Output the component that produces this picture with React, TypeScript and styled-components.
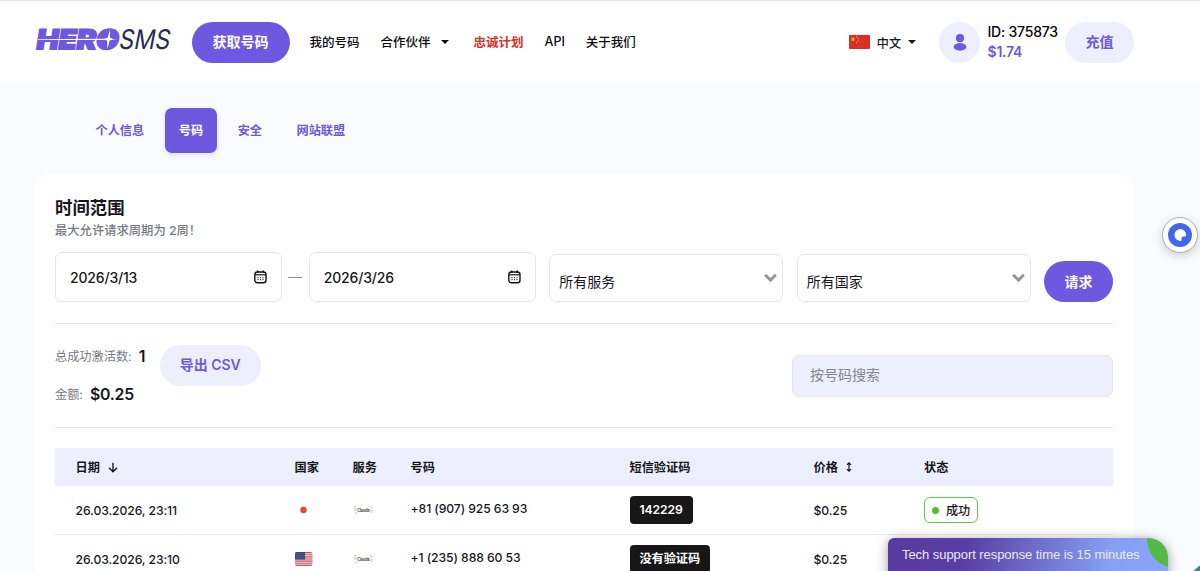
import React from "react";
import styled, { createGlobalStyle, css } from "styled-components";

const purple = "#6f58e0";
const lilac = "#eeeffe";
const ink = "#17171b";

const GlobalStyle = createGlobalStyle`
  * { box-sizing: border-box; }
  html, body { margin: 0; overflow: hidden; }
  body {
    background: #fafbff;
    color: ${ink};
    font-family: Inter, "Noto Sans CJK SC", sans-serif;
    font-size: 12.3px;
  }
  button, input { font-family: inherit; }
`;

const Page = styled.div`
  position: relative;
  height: 571px;
  overflow: hidden;
`;

const Header = styled.header`
  display: flex;
  align-items: center;
  height: 83px;
  padding: 0 66px 0 35px;
  background: #fff;
  border-top: 1px solid #e2e2e4;
`;

const Logo = styled.svg`
  width: 137px;
  height: 30px;
  margin: 0 19.5px 4px 0;
  flex: none;
  overflow: visible;
`;

const Pill = styled.button<{ $w: number; $soft?: boolean }>`
  flex: none;
  width: ${(p) => p.$w}px;
  height: 41px;
  padding: 0 0 2px;
  border: 0;
  border-radius: 21px;
  font-size: 14px;
  font-weight: 600;
  white-space: nowrap;
  color: ${(p) => (p.$soft ? purple : "#fff")};
  background: ${(p) => (p.$soft ? lilac : purple)};
`;

const RequestPill = styled(Pill)`
  margin-left: 13.5px;
`;

const Nav = styled.nav`
  display: flex;
  align-items: center;
  gap: 21px;
  margin-left: 20px;
  padding-bottom: 1px;
  flex: 1;
`;

const NavLink = styled.a<{ $hot?: boolean; $menu?: boolean }>`
  display: flex;
  align-items: center;
  gap: 10px;
  margin-right: ${(p) => (p.$menu ? 4 : 0)}px;
  font-size: 12.5px;
  font-weight: ${(p) => (p.$hot ? 600 : 500)};
  color: ${(p) => (p.$hot ? "#d6302b" : "#0c0c0f")};
  white-space: nowrap;
`;

const Caret = styled.span`
  border: 4px solid transparent;
  border-top-color: currentColor;
  border-bottom: 0;
`;

const Language = styled.div`
  display: flex;
  align-items: center;
  gap: 7px;
  margin-right: 23px;
  font-size: 12.1px;
  font-weight: 500;
`;

const Avatar = styled.div`
  display: grid;
  place-items: center;
  width: 41px;
  height: 41px;
  border-radius: 50%;
  background: ${lilac};
`;

const Account = styled.div`
  width: 78px;
  padding-left: 7.5px;
  margin-right: 7px;
  font-size: 14px;
  letter-spacing: -0.22px;
  line-height: 20.5px;
  font-weight: 500;
  color: #050507;
  white-space: nowrap;
`;

const Balance = styled.div`
  color: ${purple};
  font-weight: 600;
`;

const Tabs = styled.div`
  display: flex;
  gap: 6.5px;
  padding: 25px 0 0 81.5px;
`;

const Tab = styled.a<{ $active?: boolean }>`
  display: flex;
  align-items: center;
  height: 45px;
  padding: 0 14px 1px;
  border-radius: 7px;
  font-size: 12.2px;
  font-weight: 600;
  color: ${purple};
  ${(p) =>
    p.$active &&
    css`
      color: #fff;
      background: ${purple};
      box-shadow: 0 2px 5px rgba(80, 80, 130, 0.16);
    `}
`;

const Card = styled.main`
  width: 1100px;
  height: 420px;
  margin: 21px 0 0 34px;
  padding: 22px 21px 0;
  border-radius: 17px;
  background: #fff;
`;

const Title = styled.h1`
  margin: 0;
  font-size: 17.4px;
  line-height: 24px;
  font-weight: 600;
`;

const Hint = styled.p`
  margin: 0;
  padding-top: 1px;
  font-size: 12.3px;
  line-height: 19px;
  font-weight: 500;
  color: #767a82;
`;

const Filters = styled.div`
  display: flex;
  align-items: flex-end;
  height: 62px;
`;

const DateField = styled.div`
  display: flex;
  align-items: center;
  justify-content: space-between;
  width: 227px;
  height: 50px;
  padding: 0 14px;
  border: 1px solid #e6e6ec;
  border-radius: 7px;
  font-size: 14px;
  letter-spacing: -0.18px;
  font-weight: 500;
`;

const Dash = styled.span`
  width: 14px;
  height: 1px;
  margin: 0 6.5px 24px;
  background: #8f8f94;
`;

const Select = styled.div`
  display: flex;
  justify-content: space-between;
  width: 234px;
  height: 48px;
  margin-left: 13.7px;
  padding: 15px 5px 0 9px;
  border: 1px solid #e6e6ec;
  border-radius: 7px;
  font-size: 14px;
  line-height: 24px;
  svg { margin-top: 3px; }
`;

const Rule = styled.hr<{ $top?: number }>`
  height: 1px;
  margin: ${(p) => p.$top ?? 0}px 0 0;
  border: 0;
  background: #e6e6ea;
`;

const Summary = styled.section`
  display: flex;
  align-items: flex-start;
  height: 103px;
  padding-top: 20.5px;
`;

const Stats = styled.dl`
  width: 104.5px;
  margin: 0;
`;

const Stat = styled.div`
  display: flex;
  align-items: center;
  gap: 7px;
  height: 23px;
  margin-bottom: 15px;
  white-space: nowrap;
  dt { font-size: 12.2px; color: #777a80; }
  dd { margin: 0; font-size: 15.8px; letter-spacing: -0.2px; font-weight: 600; }
`;

const Search = styled.input`
  width: 321px;
  height: 42px;
  margin: 10px 0 0 auto;
  padding: 0 17px 2px;
  border: 1px solid #e3e4f3;
  border-radius: 7px;
  background: ${lilac};
  font-size: 14px;
  outline: 0;
  &::placeholder { color: #83858f; opacity: 1; }
`;

const Row = styled.div<{ $head?: boolean }>`
  display: grid;
  grid-template-columns: 219px 58px 58px 219px 184px 110.5px 1fr;
  align-items: center;
  height: ${(p) => (p.$head ? 38 : 49)}px;
  padding-left: 20.5px;
  font-size: 12.2px;
  font-weight: ${(p) => (p.$head ? 600 : 500)};
  background: ${(p) => (p.$head ? lilac : "transparent")};
  border-bottom: ${(p) => (p.$head ? "0" : "1px solid #ebebef")};
`;

const Table = styled.section`
  margin-top: 20px;
`;

const HeadCell = styled.div`
  display: flex;
  align-items: center;
  gap: 8px;
`;

const Cell = styled.div`
  display: flex;
  align-items: center;
  letter-spacing: -0.09px;
  white-space: nowrap;
`;

const Phone = styled(Cell)`
  padding-bottom: 4px;
`;

const Code = styled.span`
  height: 28px;
  padding: 0 10px;
  border-radius: 4px;
  background: #171717;
  color: #fff;
  font-weight: 600;
  line-height: 28px;
`;

const Status = styled.span`
  display: flex;
  align-items: center;
  gap: 7px;
  width: 54px;
  height: 26px;
  padding-left: 7px;
  border: 1px solid #62c653;
  border-radius: 6px;
  &::before {
    content: "";
    width: 7px;
    height: 7px;
    border-radius: 50%;
    background: #52bd32;
  }
`;

const Assistant = styled.div`
  position: absolute;
  left: 1162px;
  top: 216.5px;
  display: grid;
  place-items: center;
  width: 36px;
  height: 36px;
  border: 1px solid #acaeb3;
  border-radius: 50%;
  background: #fff;
  box-shadow: 0 3px 10px rgba(0, 0, 0, 0.18);
`;

const SupportShadow = styled.div`
  position: absolute;
  left: 888px;
  top: 538px;
  width: 280px;
  height: 60px;
  border-radius: 6px 20px 0 0;
  box-shadow: 0 2px 12px rgba(0, 0, 0, 0.4);
`;

const Support = styled.div`
  position: absolute;
  left: 888px;
  top: 538px;
  width: 280px;
  height: 60px;
  padding: 0 14px;
  overflow: hidden;
  border-radius: 6px 20px 0 0;
  background: linear-gradient(100deg, #573a9f 0%, #593fa5 28%, #86a0f3 78%, #8aa6f8 100%);
  color: #e9eafc;
  font: 13px/34px "Liberation Sans", Arial, sans-serif;
  letter-spacing: -0.06px;
  white-space: nowrap;
`;

const Leaf = styled.svg`
  position: absolute;
  right: 0;
  top: 0;
`;

const ChatBubble = styled.div`
  position: absolute;
  left: 1186px;
  top: 561px;
  width: 60px;
  height: 60px;
  border-radius: 50%;
  background: #3d8499;
`;

const Calendar = () => (
  <svg width="13" height="14" viewBox="0 0 13 14" fill="none" stroke="#151518">
    <rect x="0.8" y="2" width="11.2" height="10.8" rx="2.5" strokeWidth="1.4" />
    <path d="M1 4.8h11" strokeWidth="1.2" />
    <path d="M3.7 0.5v2.3M9.2 0.5v2.3" strokeWidth="1.6" />
    <path d="M3.4 7.7h1.2M5.9 7.7h1.2M8.4 7.7h1.2M3.4 9.7h1.2M5.9 9.7h1.2M8.4 9.7h1.2" strokeWidth="1" />
  </svg>
);

const Chevron = () => (
  <svg width="13" height="10" viewBox="0 0 13 10" fill="none" stroke="#969696" strokeWidth="3">
    <path d="M1.2 1.8 6.5 7.2 11.8 1.8" />
  </svg>
);

const star = "M0-1 .24-.31.95-.31.38.12.59.81 0 .4-.59.81-.38.12-.95-.31-.24-.31Z";

const ChinaFlag = () => (
  <svg width="21" height="14" viewBox="0 0 21 14">
    <rect width="21" height="14" rx="1" fill="#dc2e27" />
    <g fill="#f9d531">
      <path d={star} transform="translate(4 4.2) scale(2.5)" />
      <path d={star} transform="translate(7.6 1.8) scale(1)" />
      <path d={star} transform="translate(9.2 3.5) scale(1)" />
      <path d={star} transform="translate(9.2 5.7) scale(1)" />
      <path d={star} transform="translate(7.5 7.3) scale(1)" />
    </g>
  </svg>
);

const JapanFlag = () => (
  <svg width="17" height="14" viewBox="0 0 17 14">
    <rect width="17" height="14" rx="2" fill="#fff" />
    <circle cx="8.5" cy="7" r="3.2" fill="#e2483f" />
  </svg>
);

const UsaFlag = () => (
  <svg width="18" height="14" viewBox="0 0 18 14">
    <clipPath id="usa"><rect width="17.5" height="14" rx="2" /></clipPath>
    <g clipPath="url(#usa)">
      <rect width="18" height="14" fill="#f3e5e8" />
      <path d="M0 .6h18M0 2.7h18M0 4.9h18M0 7h18M0 9.1h18M0 11.2h18M0 13.4h18" stroke="#c4505f" strokeWidth="1.1" />
      <rect width="10" height="7.5" fill="#3d467f" />
      <path d="M1 1.6h8.5M1.8 3.6h8M1 5.6h8.5" stroke="#8b91b6" strokeWidth=".6" strokeDasharray=".7 1.1" />
    </g>
  </svg>
);

const ServiceMark = () => (
  <svg width="21" height="10" viewBox="0 0 21 10">
    <path
      d="M1 1.4l2.6.6M1.4 3.4l2 .5M.8 5.2l2.600-.4M2 8.600l2.300-1M17 .9l1.500 1.400M17.600 3.300l2-.5M17.800 5.100l2 1M16.800 6.800l2.600.4"
      fill="none"
      stroke="#bcae9c"
      strokeWidth=".8"
    />
    <text x="4.2" y="6.6" fontSize="4.2" fontWeight="700" fill="#444" textLength="12.4" lengthAdjust="spacingAndGlyphs">Claude</text>
  </svg>
);

const rows = [
  { date: "26.03.2026, 23:11", flag: <JapanFlag />, phone: "+81 (907) 925 63 93", code: "142229", price: "$0.25", status: "成功" },
  { date: "26.03.2026, 23:10", flag: <UsaFlag />, phone: "+1 (235) 888 60 53", code: "没有验证码", price: "$0.25" },
];

export default function App() {
  return (
    <Page>
      <GlobalStyle />
      <Header>
        <Logo viewBox="0 0 137 30">
          <g transform="translate(.6 24) skewX(-9)">
            <text fontSize="27" fontWeight="900" fill={purple} stroke={purple} strokeWidth="1.8" textLength="82" lengthAdjust="spacingAndGlyphs">HERO</text>
          </g>
          <ellipse cx="73.500" cy="14.300" rx="5.500" ry="7" fill={purple} />
          <path d="M3 14.300 66 13.700 83 14.300 66 15 3 14.900Z" fill="#fff" />
          <path d="M75 4.500 75 12.800 79 14.300 74.600 15.400 72.500 24 72 15.400 68 14.300 72.600 12.800Z" fill="#fff" />
          <g transform="translate(83 24.200) skewX(-11)">
            <text fontSize="27" fontWeight="400" fill="#282c55" textLength="51" lengthAdjust="spacingAndGlyphs">SMS</text>
          </g>
        </Logo>
        <Pill $w={98}>获取号码</Pill>
        <Nav>
          <NavLink>我的号码</NavLink>
          <NavLink $menu>合作伙伴 <Caret /></NavLink>
          <NavLink $hot>忠诚计划</NavLink>
          <NavLink>API</NavLink>
          <NavLink>关于我们</NavLink>
        </Nav>
        <Language><ChinaFlag />中文<Caret /></Language>
        <Avatar>
          <svg width="14" height="17" viewBox="0 0 14 17" fill={purple}>
            <circle cx="7" cy="4.2" r="4.1" />
            <ellipse cx="7" cy="12.9" rx="6.4" ry="3.8" />
          </svg>
        </Avatar>
        <Account>ID: 375873<Balance>$1.74</Balance></Account>
        <Pill $w={69} $soft>充值</Pill>
      </Header>
      <Tabs>
        <Tab>个人信息</Tab>
        <Tab $active>号码</Tab>
        <Tab>安全</Tab>
        <Tab>网站联盟</Tab>
      </Tabs>
      <Card>
        <Title>时间范围</Title>
        <Hint>最大允许请求周期为 2周！</Hint>
        <Filters>
          <DateField>2026/3/13<Calendar /></DateField>
          <Dash />
          <DateField>2026/3/26<Calendar /></DateField>
          <Select>所有服务<Chevron /></Select>
          <Select>所有国家<Chevron /></Select>
          <RequestPill $w={69}>请求</RequestPill>
        </Filters>
        <Rule $top={21} />
        <Summary>
          <Stats>
            <Stat><dt>总成功激活数:</dt><dd>1</dd></Stat>
            <Stat><dt>金额:</dt><dd>$0.25</dd></Stat>
          </Stats>
          <Pill $w={101.5} $soft>导出 CSV</Pill>
          <Search placeholder="按号码搜索" />
        </Summary>
        <Rule />
        <Table>
          <Row $head>
            <HeadCell>日期
              <svg width="10" height="11" viewBox="0 0 10 11" fill="none" stroke={ink} strokeWidth="1.4"><path d="M5 .8v9M1 5.8l4 4 4-4" /></svg>
            </HeadCell>
            <HeadCell>国家</HeadCell>
            <HeadCell>服务</HeadCell>
            <HeadCell>号码</HeadCell>
            <HeadCell>短信验证码</HeadCell>
            <HeadCell>价格
              <svg width="6" height="10" viewBox="0 0 6 10" fill="none" stroke={ink} strokeWidth="1.2"><path d="M3 1v8M1 2.8l2-2 2 2M1 7.2l2 2 2-2" /></svg>
            </HeadCell>
            <HeadCell>状态</HeadCell>
          </Row>
          {rows.map((r) => (
            <Row key={r.date}>
              <Cell>{r.date}</Cell>
              <Cell>{r.flag}</Cell>
              <Cell><ServiceMark /></Cell>
              <Phone>{r.phone}</Phone>
              <Cell><Code>{r.code}</Code></Cell>
              <Cell>{r.price}</Cell>
              <Cell>{r.status && <Status>{r.status}</Status>}</Cell>
            </Row>
          ))}
        </Table>
      </Card>
      <Assistant>
        <svg width="24" height="24" viewBox="0 0 24 24">
          <circle cx="12" cy="12" r="12" fill="#3f67ec" />
          <path d="M12 6a6 6 0 1 0 1 12c1.2-.4 0-3 1-4s3.8.3 4-1.8A6 6 0 0 0 12 6Z" fill="#fff" />
        </svg>
      </Assistant>
      <SupportShadow />
      <Support>
        Tech support response time is 15 minutes
        <Leaf width="21" height="29" viewBox="0 0 21 29"><path d="M0 0h21v29C8 25 0 14 0 0Z" fill="#55b947" /></Leaf>
      </Support>
      <ChatBubble />
    </Page>
  );
}
